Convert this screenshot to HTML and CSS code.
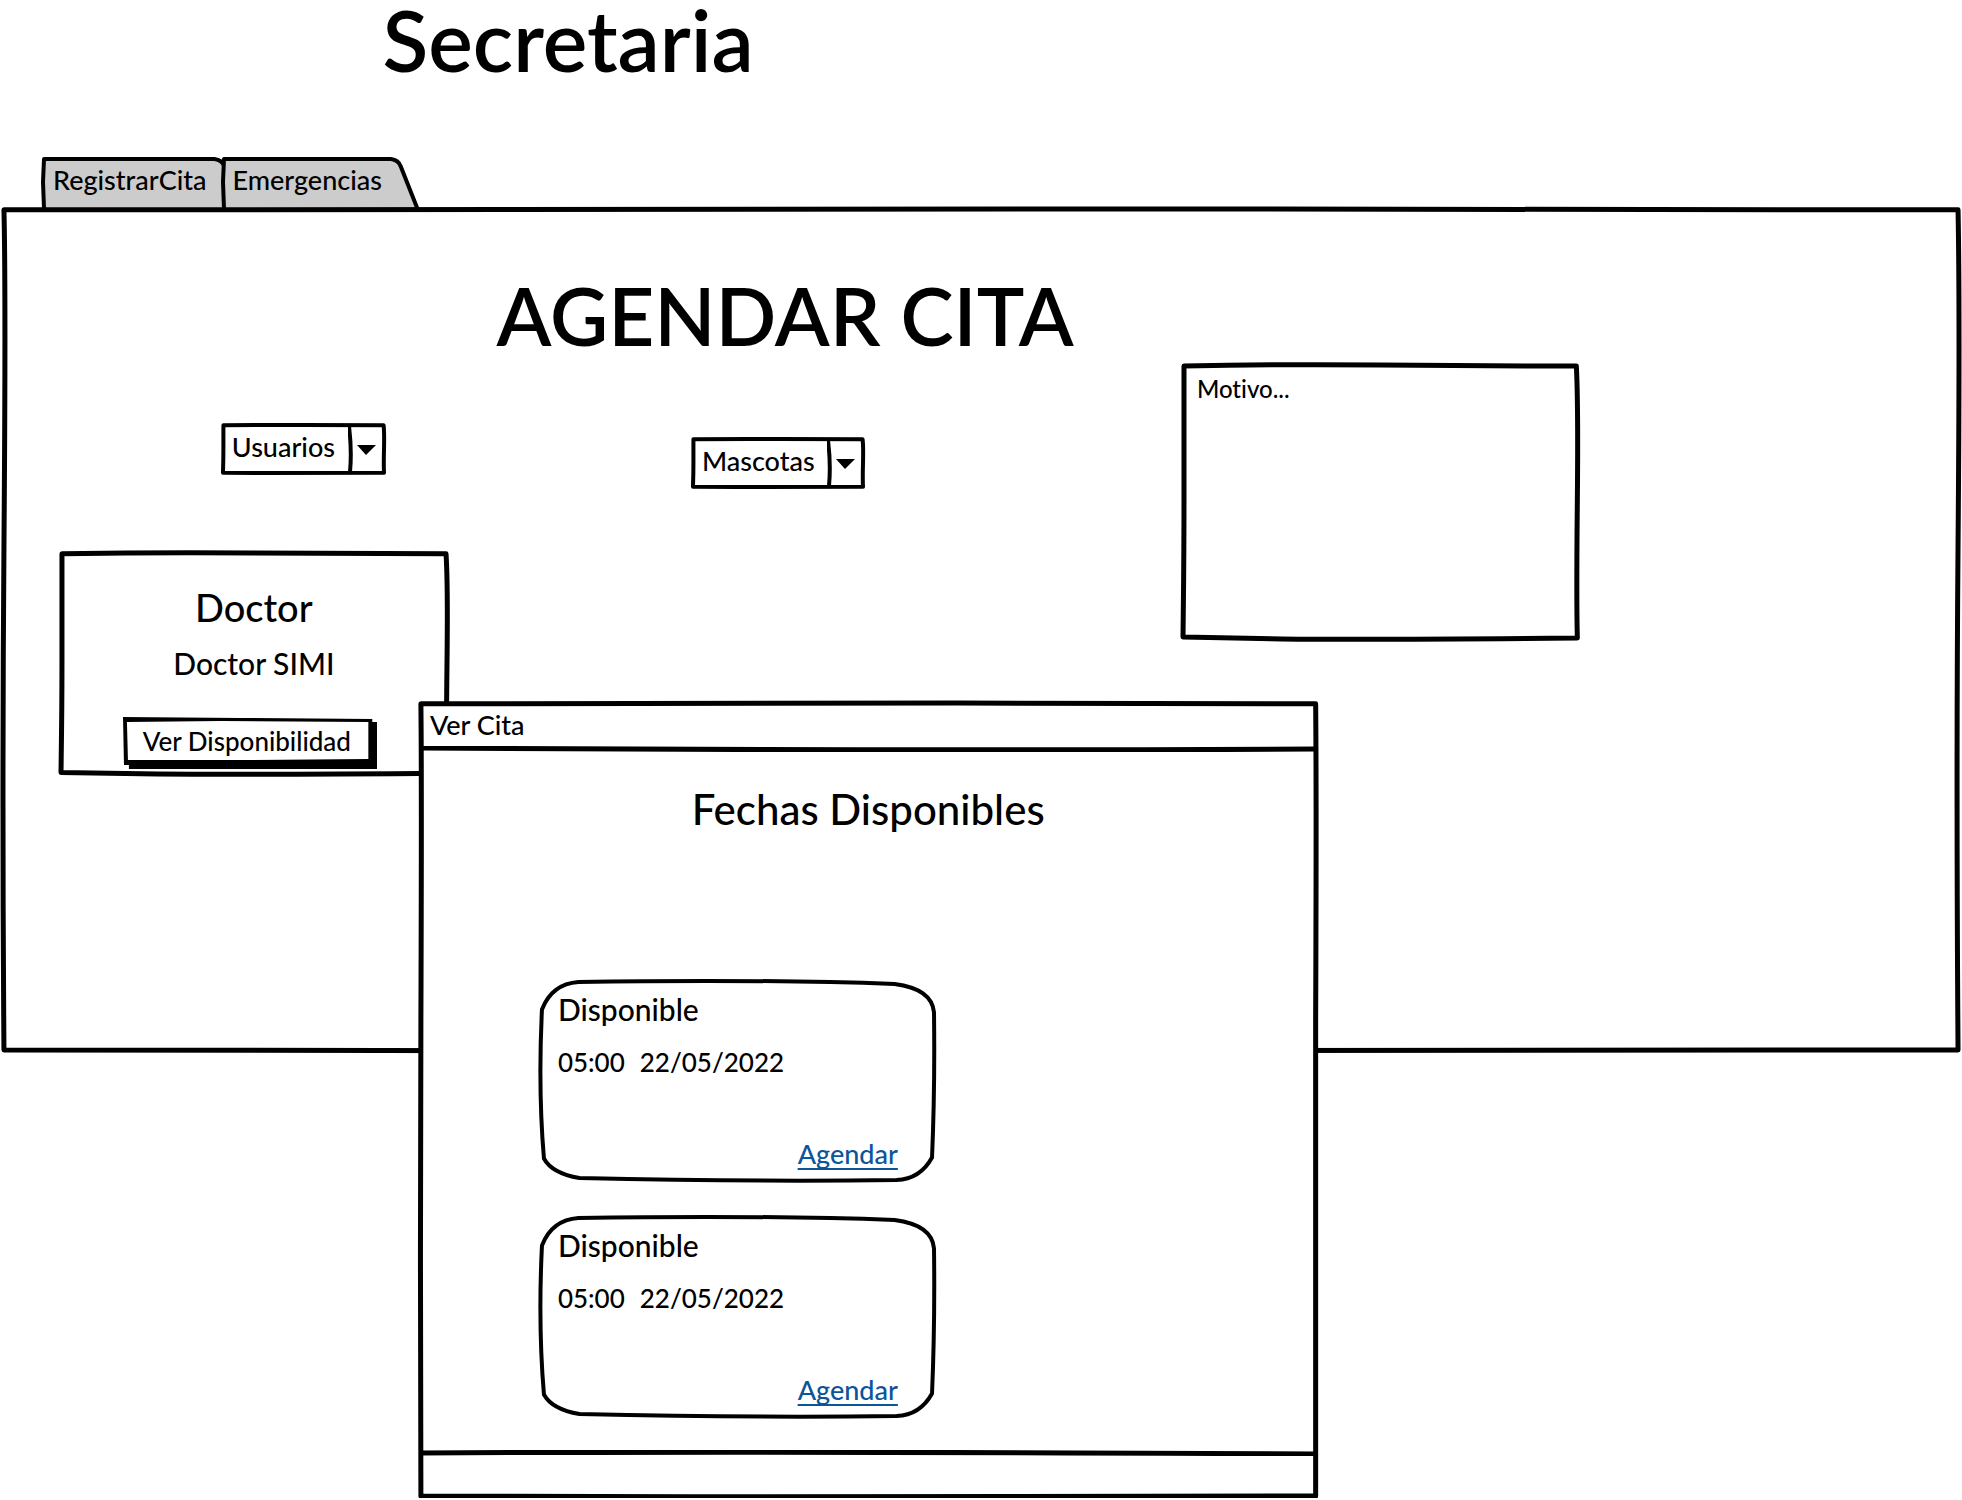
FILE: index.html
```html
<!DOCTYPE html>
<html lang="es">
<head>
<meta charset="utf-8">
<title>Secretaria</title>
<link rel="stylesheet" href="styles.css">
</head>
<body>
<svg class="defs" aria-hidden="true">
  <symbol id="box" viewBox="0 0 400 280" preserveAspectRatio="none">
    <path d="M1 1 Q100 -1 200 0 T399 1 Q401 40 400 140 T400 279 Q200 281 100 280 L0 278 Q1 200 1 140 T1 1Z"/>
  </symbol>
  <symbol id="box-large" viewBox="0 0 1000 1000" preserveAspectRatio="none">
    <path d="M1 1 Q300 -1 600 0 T999 1 Q1000 120 999 400 T999 1000 Q600 1002 300 1001 L1 1000 Q0 700 1 400 T1 1Z"/>
  </symbol>
  <symbol id="tab" viewBox="0 0 196 50" preserveAspectRatio="none">
    <path d="M1 54 L0 25 L1 0 H170 Q178 1 180 8 L197 54"/>
  </symbol>
  <symbol id="card" viewBox="0 0 400 204" preserveAspectRatio="none">
    <path d="M39 1 Q220 -2 360 3 Q398 8 400 32 Q401 110 398 180 Q386 202 362 203 Q220 205 40 201 Q12 196 4 181 Q-2 110 2 29 Q12 3 39 1Z"/>
  </symbol>
</svg>

<h1 class="page-title">Secretaria</h1>

<nav class="tabs">
  <button class="tab" type="button"><svg class="sketch thin"><use href="#tab"/></svg><span>RegistrarCita</span></button>
  <button class="tab" type="button"><svg class="sketch thin"><use href="#tab"/></svg><span>Emergencias</span></button>
</nav>

<main class="workspace">
  <section class="panel">
    <svg class="sketch"><use href="#box-large"/></svg>
    <h2 class="panel-title">AGENDAR CITA</h2>
    <div class="fields">
      <div class="people">
        <div class="combo">
          <svg class="sketch thin"><use href="#box"/></svg>
          <select aria-label="Usuarios"><option>Usuarios</option></select>
          <svg class="arrow" viewBox="0 0 38 52"><path class="divider" d="M1 3 Q4 28 2 49"/><path d="M9 22 H28 L18 32Z"/></svg>
        </div>
        <article class="doctor">
          <svg class="sketch"><use href="#box"/></svg>
          <h3>Doctor</h3>
          <p>Doctor SIMI</p>
          <button class="action" type="button">
            <svg class="shadow" viewBox="0 0 258 52" preserveAspectRatio="none"><path d="M0 0 L120 1 L253 2 V5 L258 5 V52 H6 V48 H1Z"/><path class="face" d="M4 5 L100 4 L249 5 V42 L120 43 L5 43Z"/></svg>
            <span>Ver Disponibilidad</span>
          </button>
        </article>
      </div>
      <div class="pets">
        <div class="combo">
          <svg class="sketch thin"><use href="#box"/></svg>
          <select aria-label="Mascotas"><option>Mascotas</option></select>
          <svg class="arrow" viewBox="0 0 38 52"><path class="divider" d="M1 3 Q4 28 2 49"/><path d="M9 22 H28 L18 32Z"/></svg>
        </div>
      </div>
      <div class="reason">
        <svg class="sketch"><use href="#box"/></svg>
        <textarea aria-label="Motivo" placeholder="Motivo..."></textarea>
      </div>
    </div>
  </section>

  <section class="window" role="dialog" aria-labelledby="window-title">
    <svg class="sketch"><use href="#box-large"/></svg>
    <header class="window-bar" id="window-title">Ver Cita</header>
    <svg class="rule" viewBox="0 0 900 6" preserveAspectRatio="none"><path d="M3 2 Q450 5 897 3"/></svg>
    <div class="window-body">
      <h2>Fechas Disponibles</h2>
      <ul class="slots">
        <li class="slot">
          <svg class="sketch thin"><use href="#card"/></svg>
          <h3>Disponible</h3>
          <p class="when"><span>05:00</span><span>22/05/2022</span></p>
          <a href="#agendar">Agendar</a>
        </li>
        <li class="slot">
          <svg class="sketch thin"><use href="#card"/></svg>
          <h3>Disponible</h3>
          <p class="when"><span>05:00</span><span>22/05/2022</span></p>
          <a href="#agendar">Agendar</a>
        </li>
      </ul>
    </div>
    <svg class="rule" viewBox="0 0 900 6" preserveAspectRatio="none"><path d="M3 3 Q350 1 897 4"/></svg>
    <footer class="window-foot"></footer>
  </section>
</main>
</body>
</html>
```
FILE: styles.css
```css
* { box-sizing: border-box; }

body {
  margin: 0;
  background: #fff;
  color: #000;
  font: 500 27px/32px Lato, "Open Sans", sans-serif;
}

h1, h2, h3, p, ul { margin: 0; padding: 0; font-weight: 500; }
ul { list-style: none; }
button, select, textarea { font: inherit; color: inherit; }

.defs { display: none; }

/* Hand-drawn outline stretched behind its box */
.sketch {
  position: absolute;
  top: 2px;
  left: 2px;
  width: calc(100% - 4px);
  height: calc(100% - 4px);
  overflow: visible;
  fill: #fff;
  stroke: #000;
  stroke-width: 5px;
  stroke-linejoin: round;
  pointer-events: none;
}
.sketch.thin { stroke-width: 4px; }
symbol { overflow: visible; }
symbol path, .rule path { vector-effect: non-scaling-stroke; }

.page-title {
  padding-left: 19.5%;
  margin-bottom: 77px;
  font-size: 84px;
  font-weight: 600;
  line-height: 80px;
}

.tabs { display: flex; padding-left: 41px; }
.tab {
  position: relative;
  height: 50px;
  padding: 0 36px 4px 12px;
  border: 0;
  background: none;
}
.tab + .tab { margin-left: -22px; }
.tab .sketch { fill: #ccc; }
.tab span { position: relative; }

/* The panel and the window share one grid cell so the window lies on top */
.workspace { display: grid; }
.workspace > * { grid-area: 1 / 1; align-self: start; }

.panel {
  position: relative;
  padding: 60px 0 276px 3%;
}
.panel > * { position: relative; }
.panel > .sketch { position: absolute; }
.panel-title {
  padding-left: 23%;
  font-size: 80px;
  font-weight: 600;
  line-height: 96px;
}

.fields {
  display: grid;
  grid-template-columns: 632fr 490fr 781fr;
  align-items: start;
}
.people { padding-top: 60px; }
.people .combo { margin-left: 162px; }
.pets { padding-top: 74px; }

.combo {
  position: relative;
  display: flex;
  width: fit-content;
  height: 52px;
}
.combo select {
  position: relative;
  appearance: none;
  padding: 0 50px 5px 11px;
  border: 0;
  background: none;
}
.arrow {
  position: absolute;
  right: 0;
  top: 0;
  width: 38px;
  height: 52px;
  pointer-events: none;
}
.divider { fill: none; stroke: #000; stroke-width: 4px; }

.doctor {
  position: relative;
  display: flex;
  flex-direction: column;
  align-items: center;
  width: 390px;
  margin-top: 76px;
  padding: 32px 0 7px;
}
.doctor > * { position: relative; }
.doctor > .sketch { position: absolute; }
.doctor h3 { font-size: 38px; line-height: 48px; }
.doctor p { margin: 12px 0 34px; font-size: 30px; line-height: 40px; }

.action {
  height: 52px;
  margin-right: 8px;
  padding: 0 26px 4px 20px;
  border: 0;
  background: none;
  font-size: 26px;
}
.action span { position: relative; }
.shadow { position: absolute; inset: 0; width: 100%; height: 100%; }
.face { fill: #fff; }

.reason {
  position: relative;
  width: 51%;
  height: 278px;
}
.reason textarea {
  position: relative;
  width: 100%;
  height: 100%;
  padding: 10px 16px;
  border: 0;
  background: none;
  font-size: 24px;
  font-variant-ligatures: none;
  resize: none;
}
.reason textarea::placeholder { color: #000; opacity: 1; }

/* Floating window over the panel */
.window {
  position: relative;
  width: 45.9%;
  margin: 494px 0 0 21.3%;
}
.window > * { position: relative; }
.window > .sketch { position: absolute; }
.window-bar { padding: 8px 12px 5px; }
.rule {
  display: block;
  width: 100%;
  height: 6px;
  fill: none;
  stroke: #000;
  stroke-width: 5px;
}
.window-body { padding: 32px 0 31px; }
.window-body h2 { text-align: center; font-size: 42px; line-height: 50px; }
.slots {
  display: flex;
  flex-direction: column;
  gap: 32px;
  margin-top: 145px;
  padding-left: 120px;
}
.slot {
  position: relative;
  display: flex;
  flex-direction: column;
  width: 398px;
  padding: 10px 38px 13px 20px;
}
.slot > * { position: relative; }
.slot > .sketch { position: absolute; }
.slot h3 { font-size: 30px; line-height: 40px; }
.when { display: flex; gap: 15px; margin: 17px 0 60px; font-size: 26px; }
.slot a {
  align-self: flex-end;
  color: #0b5599;
  text-decoration: underline 2px;
  text-underline-offset: 4px;
  text-decoration-skip-ink: none;
}
.window-foot { height: 42px; }
```
